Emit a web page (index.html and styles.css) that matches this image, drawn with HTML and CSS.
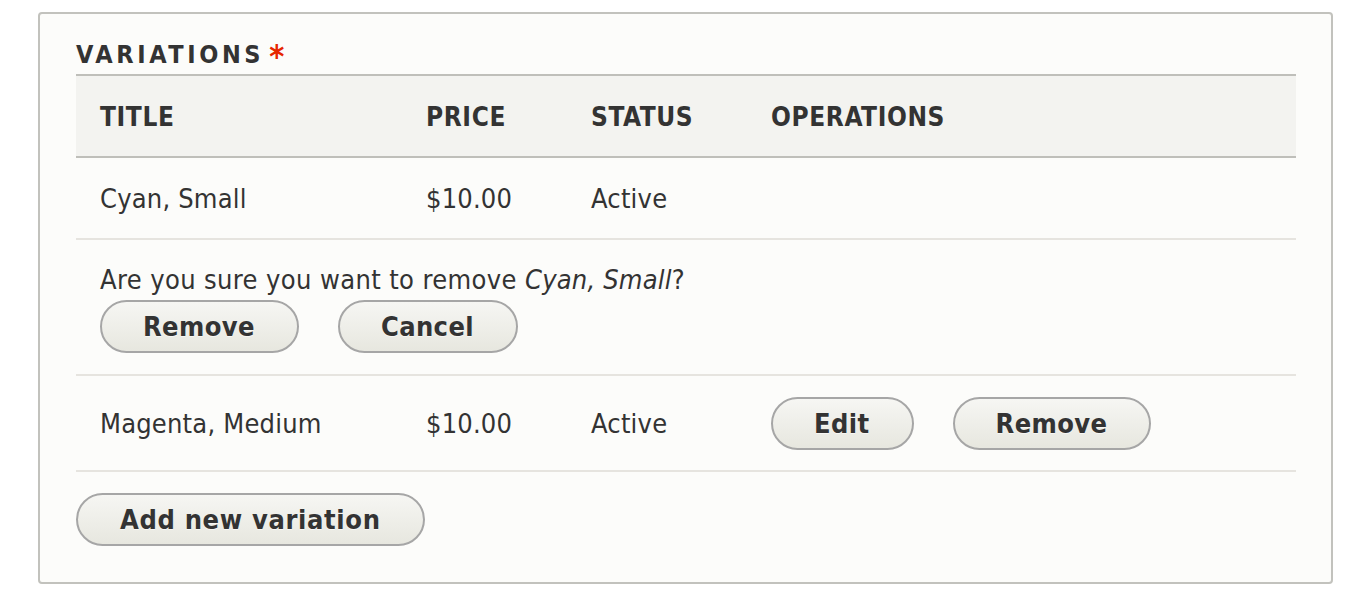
FILE: index.html
```html
<!DOCTYPE html>
<html lang="en">
<head>
<meta charset="utf-8">
<title>Variations</title>
<link rel="stylesheet" href="styles.css">
</head>
<body>
<fieldset class="panel">
  <div class="panel-title">Variations<span class="required">*</span></div>
  <table class="variations">
    <colgroup>
      <col class="col-title">
      <col class="col-price">
      <col class="col-status">
      <col class="col-ops">
    </colgroup>
    <thead>
      <tr>
        <th>Title</th>
        <th>Price</th>
        <th>Status</th>
        <th>Operations</th>
      </tr>
    </thead>
    <tbody>
      <tr>
        <td>Cyan, Small</td>
        <td>$10.00</td>
        <td>Active</td>
        <td></td>
      </tr>
      <tr>
        <td colspan="4" class="confirm">
          <div class="confirm-text">Are you sure you want to remove <em>Cyan, Small</em>?</div>
          <div class="actions">
            <button class="button" type="button">Remove</button>
            <button class="button" type="button">Cancel</button>
          </div>
        </td>
      </tr>
      <tr>
        <td>Magenta, Medium</td>
        <td>$10.00</td>
        <td>Active</td>
        <td class="ops">
          <div class="actions">
            <button class="button" type="button">Edit</button>
            <button class="button" type="button">Remove</button>
          </div>
        </td>
      </tr>
    </tbody>
  </table>
  <div class="footer">
    <button class="button button-wide" type="button">Add new variation</button>
  </div>
</fieldset>
</body>
</html>
```

FILE: styles.css
```css
html, body {
  margin: 0;
  background: #ffffff;
}

body {
  padding: 12px 27px 0 38px;
  font-family: "DejaVu Sans Condensed", "DejaVu Sans", sans-serif;
  font-stretch: condensed;
  color: #333333;
  font-size: 27px;
}

.panel {
  margin: 0;
  padding: 0 35px 36px 36px;
  border: 2px solid #c2c2bd;
  border-radius: 4px;
  background: #fcfcfa;
  min-width: 0;
}

.panel-title {
  padding-top: 26px;
  height: 34px;
  font-size: 25px;
  line-height: 30px;
  font-weight: bold;
  text-transform: uppercase;
  letter-spacing: 3.6px;
  color: #333333;
}

.required {
  color: #e62600;
  margin-left: 5px;
  letter-spacing: 0;
  font-size: 32px;
  line-height: 30px;
  vertical-align: top;
  position: relative;
  top: 1px;
}

.variations {
  width: 100%;
  border-collapse: collapse;
  border-spacing: 0;
  table-layout: fixed;
}

.col-title { width: 326px; }
.col-price { width: 165px; }
.col-status { width: 180px; }

.variations th {
  text-align: left;
  font-weight: bold;
  text-transform: uppercase;
  letter-spacing: 0.6px;
  font-size: 26px;
  background: #f3f3f0;
  border-top: 2px solid #bfbfba;
  border-bottom: 2px solid #bfbfba;
  padding: 21px 24px 18px;
  line-height: 41px;
}

.variations td {
  padding: 21px 24px 19px;
  line-height: 40px;
  border-bottom: 2px solid #e6e4df;
  vertical-align: middle;
  letter-spacing: 0.2px;
}

.variations td.confirm {
  padding-top: 20px;
  padding-bottom: 21px;
}

.variations td.ops {
  padding-top: 21px;
  padding-bottom: 20px;
  line-height: 1;
}

.confirm-text {
  line-height: 40px;
  letter-spacing: 0.38px;
}

.confirm-text em {
  font-style: italic;
  letter-spacing: 0.2px;
}

.actions {
  display: flex;
  gap: 39px;
}

.button {
  display: inline-block;
  box-sizing: border-box;
  height: 53px;
  padding: 0 42px 0 41px;
  margin: 0;
  border: 2px solid #a6a6a6;
  border-radius: 40px;
  background: linear-gradient(to bottom, #f6f6f3 0%, #e7e7df 100%);
  font-family: inherit;
  font-stretch: condensed;
  font-size: 27px;
  font-weight: bold;
  letter-spacing: 0.4px;
  color: #333333;
  text-shadow: 0 1px rgba(255, 255, 255, 0.6);
  line-height: 50px;
  cursor: pointer;
}

.button-wide {
  letter-spacing: 0.65px;
  padding: 0 42px 0 42px;
}

.footer {
  padding-top: 21px;
  display: flex;
}
```
